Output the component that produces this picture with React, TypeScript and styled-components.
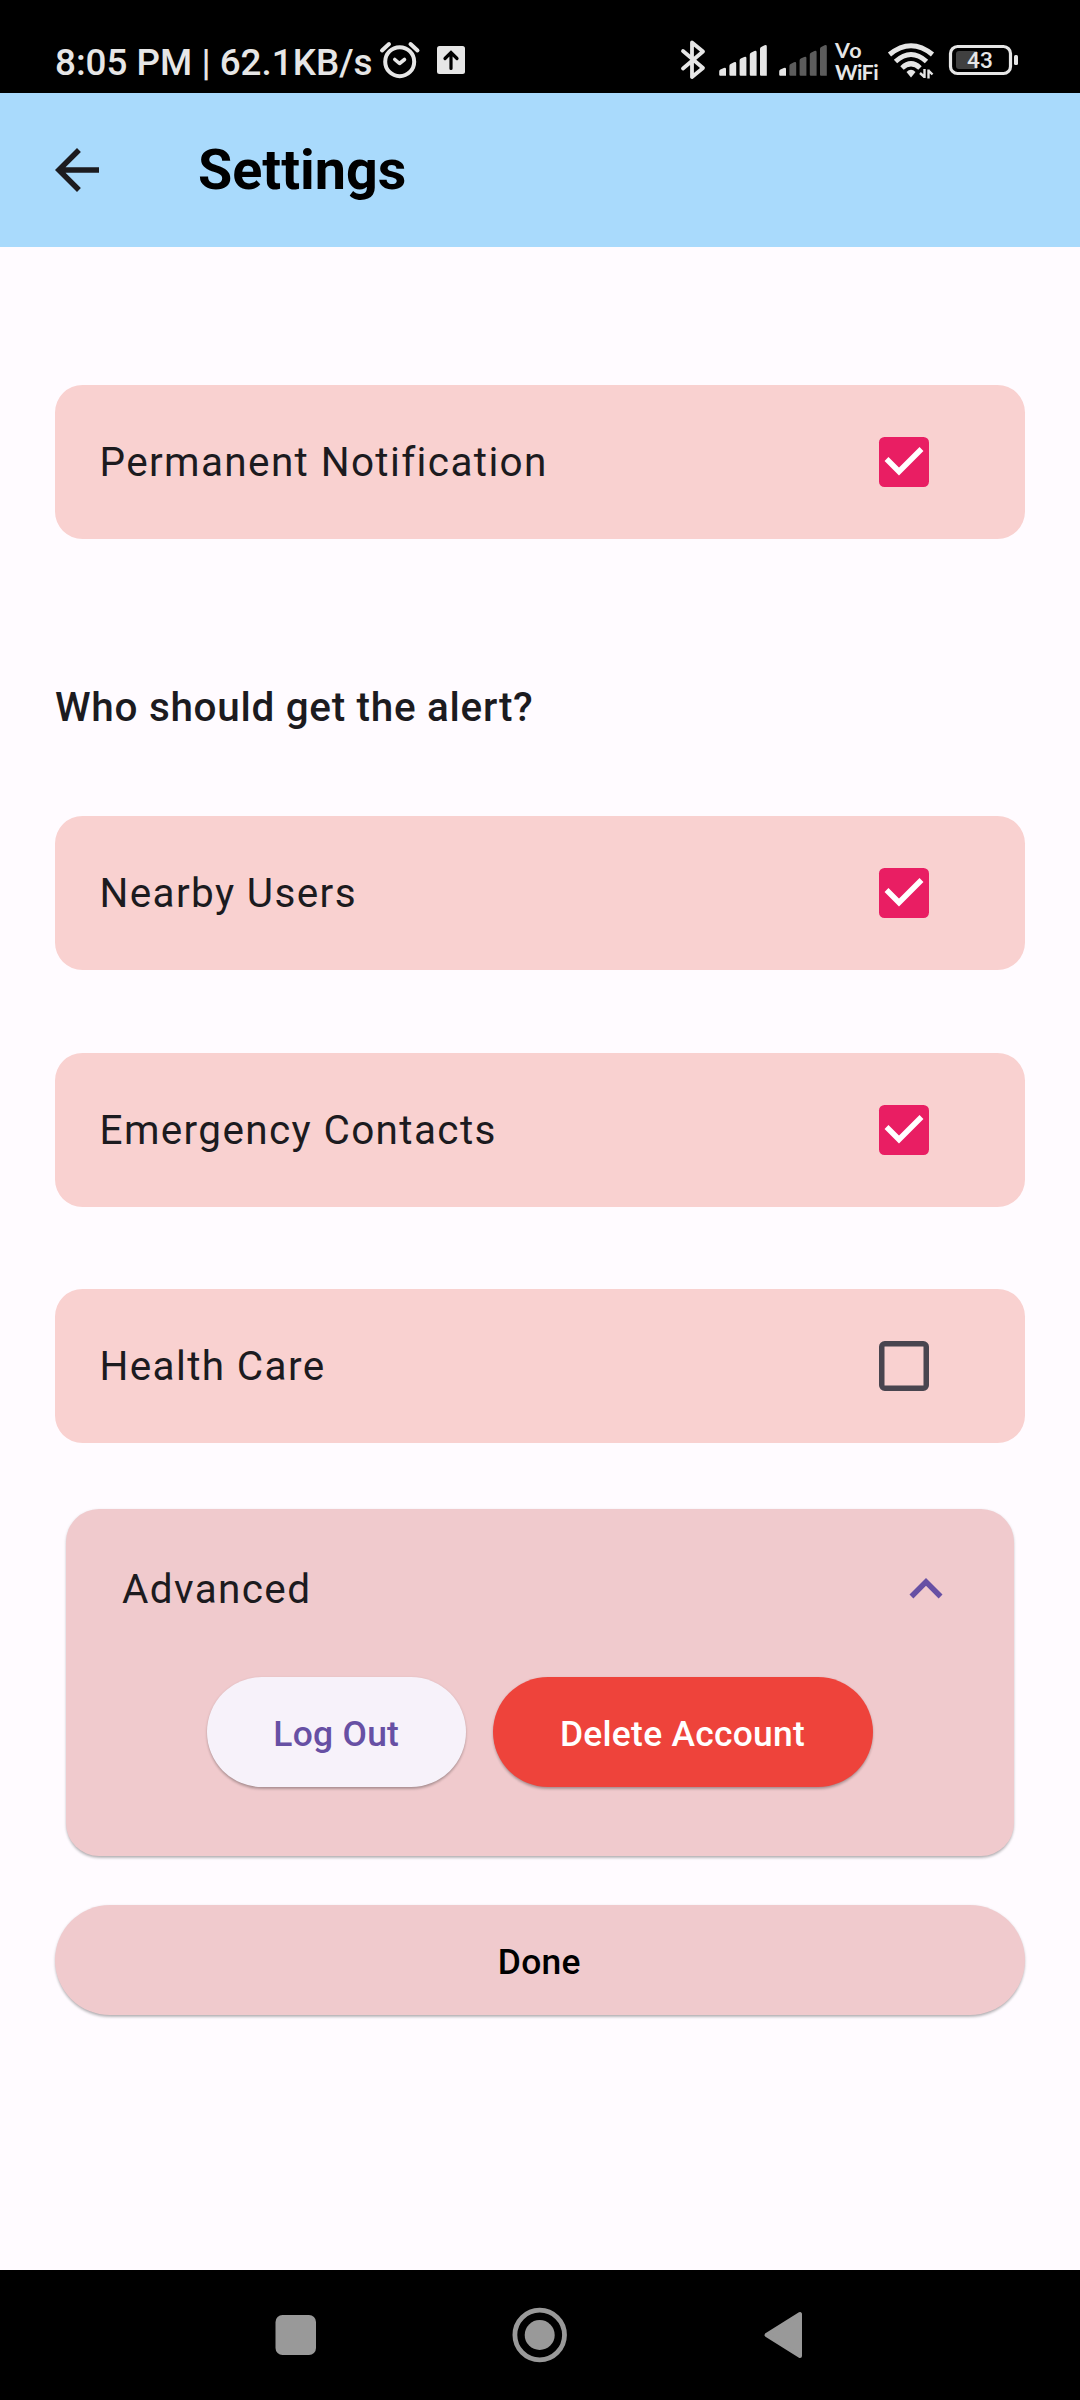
import React, { useState } from "react";
import styled, { createGlobalStyle } from "styled-components";

const GlobalStyle = createGlobalStyle`
  * { box-sizing: border-box; }
  html, body { margin: 0; padding: 0; background: #fffbff; }
  button { font: inherit; border: 0; padding: 0; cursor: pointer; background: none; }
`;

const Screen = styled.div`
  width: 1080px;
  height: 2400px;
  display: flex;
  flex-direction: column;
  background: #fffbff;
  color: #1c1b1f;
  font-family: Roboto, "Noto Sans", sans-serif;
  overflow: hidden;
`;

const StatusBar = styled.div`
  height: 93px;
  flex: none;
  display: flex;
  justify-content: space-between;
  align-items: flex-start;
  padding: 39px 62px 0 55px;
  background: #000;
  color: #e6e6e6;
`;

const StatusLeft = styled.div`
  display: flex;
  align-items: flex-start;
`;

const Clock = styled.span`
  width: 324px;
  font-size: 36.8px;
  line-height: 48px;
  font-weight: 500;
  white-space: nowrap;
`;

const StatusIcon = styled.svg<{ $gap?: number }>`
  display: block;
  flex: none;
  margin-left: ${(p) => p.$gap ?? 0}px;
`;

const AppBar = styled.header`
  height: 154px;
  flex: none;
  display: flex;
  align-items: center;
  padding-left: 44px;
  background: #a9dafc;
`;

const BackButton = styled.button`
  display: flex;
  width: 66px;
  height: 66px;
`;

const Title = styled.h1`
  margin: 0 0 0 88px;
  font-size: 55.66px;
  line-height: 70px;
  font-weight: 700;
  color: #000;
`;

const Content = styled.main`
  flex: 1;
  display: flex;
  flex-direction: column;
  padding: 138px 55px 0;
`;

const Options = styled.div`
  display: flex;
  flex-direction: column;
  gap: 82.5px;
`;

const OptionCard = styled.label`
  height: 154px;
  display: flex;
  align-items: center;
  justify-content: space-between;
  padding: 0 88px 0 44.5px;
  border-radius: 27.5px;
  background: #f9d1d0;
`;

const Label = styled.span`
  font-size: 40.48px;
  line-height: 60px;
  font-weight: 400;
  letter-spacing: 1.375px;
`;

const CheckButton = styled.button`
  display: flex;
  width: 66px;
  height: 66px;
`;

const Question = styled.h2`
  margin: 139px 0 79px;
  font-size: 40.48px;
  line-height: 59px;
  font-weight: 500;
  letter-spacing: 0.69px;
`;

const shadow = "0 3px 3px -1px rgba(0,0,0,0.2), 0 1px 3px rgba(0,0,0,0.16)";

const Advanced = styled.section`
  height: 346.5px;
  margin: 66px 11px 0;
  border-radius: 33px;
  background: #f0cacd;
  box-shadow: ${shadow};
`;

const AdvancedHead = styled.div`
  height: 154px;
  display: flex;
  align-items: center;
  justify-content: space-between;
  padding: 5px 55px 0 56px;
`;

const ActionRow = styled.div`
  display: flex;
  justify-content: center;
  gap: 27.5px;
  padding-top: 14px;
`;

const PillButton = styled.button<{ $bg: string; $fg: string; $width: string }>`
  width: ${(p) => p.$width};
  height: 110px;
  display: flex;
  align-items: center;
  justify-content: center;
  border-radius: 55px;
  background: ${(p) => p.$bg};
  color: ${(p) => p.$fg};
  box-shadow: ${shadow};
`;

const PillText = styled.span<{ $trim?: number }>`
  font-size: 35.42px;
  line-height: 50px;
  font-weight: 500;
  letter-spacing: 0.275px;
  white-space: nowrap;
  padding: 4px ${(p) => p.$trim ?? 1.5}px 0 0;
`;

const DoneSlot = styled.div`
  display: flex;
  margin-top: 49.5px;
`;

const NavBar = styled.nav`
  height: 130px;
  flex: none;
  display: flex;
  align-items: center;
  justify-content: space-between;
  padding: 0 274px 0 272px;
  background: #000;
`;

const BluetoothIcon = () => (
  <StatusIcon width="26" height="42" viewBox="680 39 26 42" fill="none" stroke="#e6e6e6" strokeWidth="3.8" strokeLinejoin="round" strokeLinecap="round">
    <path d="M683 51 L703 68 L692 77 V42.5 L703 51.5 L683 68.5" />
  </StatusIcon>
);

const SignalIcon = ({ level, gap }: { level: number; gap: number }) => {
  const tops = [67.6, 62, 56.6, 50.8, 45];
  return (
    <StatusIcon $gap={gap} width="48" height="42" viewBox="0 39 48 42">
      {tops.map((top, i) => {
        const x = 0.2 + i * 10.2;
        return (
          <path
            key={top}
            d={`M${x} ${top + 4} q0 -1.4 1.2 -2 L${x + 4.6} ${top + 0.3} q2.2 -.8 2.2 1.2 V75.800 H${x + 1} q-1 0 -1 -1 Z`}
            fill={i < level ? "#e6e6e6" : "#5c5c5c"}
          />
        );
      })}
    </StatusIcon>
  );
};

const VoWifi = styled.div`
  width: 44px;
  height: 44px;
  margin-left: 8px;
  display: flex;
  flex-direction: column;
  font-family: Lato, Roboto, sans-serif;
  font-weight: 700;
  font-size: 21.5px;
  line-height: 22px;
  white-space: nowrap;
`;

const VoText = styled.span`
  letter-spacing: 1px;
`;

const WifiText = styled.span`
  letter-spacing: -0.6px;
`;

const WifiIcon = () => (
  <StatusIcon $gap={8} width="48" height="42" viewBox="887 39 48 42" fill="none" stroke="#e6e6e6" strokeWidth="5">
    <path d="M889.5 54.5 Q911 37 932.5 54.5" />
    <path d="M895.500 61.500 Q911 47.500 926.500 61.500" />
    <path d="M902 68 Q911 59.500 920 68" />
    <path d="M906.500 72 Q911 67.500 915.500 72 L911 77.500 Z" fill="#e6e6e6" stroke="none" />
    <path d="M924.500 69 V78 M924.500 77 L920 73 M928.500 78.500 V69.500 M928.500 70.500 L932.500 74.500" strokeWidth="2.400" />
  </StatusIcon>
);

const BatteryIcon = () => (
  <StatusIcon $gap={13} width="70" height="42" viewBox="948 39 70 42">
    <rect x="950.500" y="46.500" width="60" height="27" rx="7" fill="none" stroke="#e6e6e6" strokeWidth="3.200" />
    <path d="M959 51 H977 V69 H959 Q956 69 956 66 V54 Q956 51 959 51 Z" fill="#404040" />
    <rect x="1014" y="55" width="4" height="10" rx="1.500" fill="#e6e6e6" />
    <text x="980" y="68.400" textAnchor="middle" fontFamily="Roboto, sans-serif" fontWeight="500" fontSize="22.700" fill="#e6e6e6">43</text>
  </StatusIcon>
);

const StatusRight = styled.div`
  display: flex;
  align-items: flex-start;
`;

const Checkbox = ({ checked }: { checked: boolean }) => (
  <svg width="66" height="66" viewBox="0 0 66 66">
    {checked ? (
      <>
        <rect x="8" y="8" width="50" height="50" rx="5.500" fill="#e91e63" />
        <path d="M15.500 30 L28 42.500 L50.500 20" fill="none" stroke="#fff" strokeWidth="5.500" />
      </>
    ) : (
      <rect x="10.750" y="10.750" width="44.500" height="44.500" rx="3" fill="none" stroke="#49454f" strokeWidth="5.500" />
    )}
  </svg>
);

const Option = ({ label, initial }: { label: string; initial: boolean }) => {
  const [checked, setChecked] = useState(initial);
  return (
    <OptionCard>
      <Label>{label}</Label>
      <CheckButton role="checkbox" aria-checked={checked} aria-label={label} onClick={() => setChecked(!checked)}>
        <Checkbox checked={checked} />
      </CheckButton>
    </OptionCard>
  );
};

export default function App() {
  return (
    <Screen>
      <GlobalStyle />
      <StatusBar>
        <StatusLeft>
          <Clock>8:05 PM | 62.1KB/s</Clock>
          <StatusIcon width="42" height="42" viewBox="379 39 42 42" fill="none" stroke="#e6e6e6" strokeLinecap="round" strokeLinejoin="round">
            <circle cx="399.700" cy="61.700" r="14.500" strokeWidth="4" />
            <path d="M382 50.500 L389 44 M417.500 50.500 L410.500 44" strokeWidth="4" />
            <path d="M394.800 59.500 L399.500 63.500 L404.500 59.500" strokeWidth="3.600" />
          </StatusIcon>
          <StatusIcon width="48" height="42" viewBox="421 39 48 42">
            <rect x="437" y="46" width="28" height="28" rx="2.500" fill="#e6e6e6" />
            <path d="M451 68.500 V52.500 M445 58.500 L451 52.500 L457 58.500" fill="none" stroke="#000" strokeWidth="3.200" strokeLinecap="round" />
          </StatusIcon>
        </StatusLeft>
        <StatusRight>
          <BluetoothIcon />
          <SignalIcon level={5} gap={13} />
          <SignalIcon level={1} gap={12} />
          <VoWifi>
            <VoText>Vo</VoText>
            <WifiText>WiFi</WifiText>
          </VoWifi>
          <WifiIcon />
          <BatteryIcon />
        </StatusRight>
      </StatusBar>

      <AppBar>
        <BackButton aria-label="Back">
          <svg width="66" height="66" viewBox="0 0 24 24" fill="#1c1b1f">
            <path d="M20 11H7.830l5.590-5.590L12 4l-8 8 8 8 1.410-1.410L7.830 13H20v-2z" />
          </svg>
        </BackButton>
        <Title>Settings</Title>
      </AppBar>

      <Content>
        <Option label="Permanent Notification" initial />
        <Question>Who should get the alert?</Question>
        <Options>
          <Option label="Nearby Users" initial />
          <Option label="Emergency Contacts" initial />
          <Option label="Health Care" initial={false} />
        </Options>
        <Advanced>
          <AdvancedHead>
            <Label>Advanced</Label>
            <svg width="66" height="66" viewBox="0 0 24 24" fill="#6750a4">
              <path d="M12 8l-6 6 1.410 1.410L12 10.830l4.590 4.580L18 14z" />
            </svg>
          </AdvancedHead>
          <ActionRow>
            <PillButton $bg="#f7f2fa" $fg="#6750a4" $width="259px">
              <PillText $trim={0}>Log Out</PillText>
            </PillButton>
            <PillButton $bg="#ee433b" $fg="#fff" $width="380px">
              <PillText>Delete Account</PillText>
            </PillButton>
          </ActionRow>
        </Advanced>
        <DoneSlot>
          <PillButton $bg="#f0cacd" $fg="#000" $width="100%">
            <PillText>Done</PillText>
          </PillButton>
        </DoneSlot>
      </Content>

      <NavBar>
        <svg width="48" height="60" viewBox="0 0 48 60">
          <rect x="3.500" y="10" width="40.500" height="40" rx="7" fill="#999" />
        </svg>
        <svg width="60" height="60" viewBox="0 0 60 60">
          <circle cx="30.700" cy="30" r="24.800" fill="none" stroke="#999" strokeWidth="4.800" />
          <circle cx="30.700" cy="30" r="15" fill="#999" />
        </svg>
        <svg width="48" height="60" viewBox="0 0 48 60">
          <path d="M8.500 30 L42 9 V51 Z" fill="#999" stroke="#999" strokeWidth="4" strokeLinejoin="round" />
        </svg>
      </NavBar>
    </Screen>
  );
}
